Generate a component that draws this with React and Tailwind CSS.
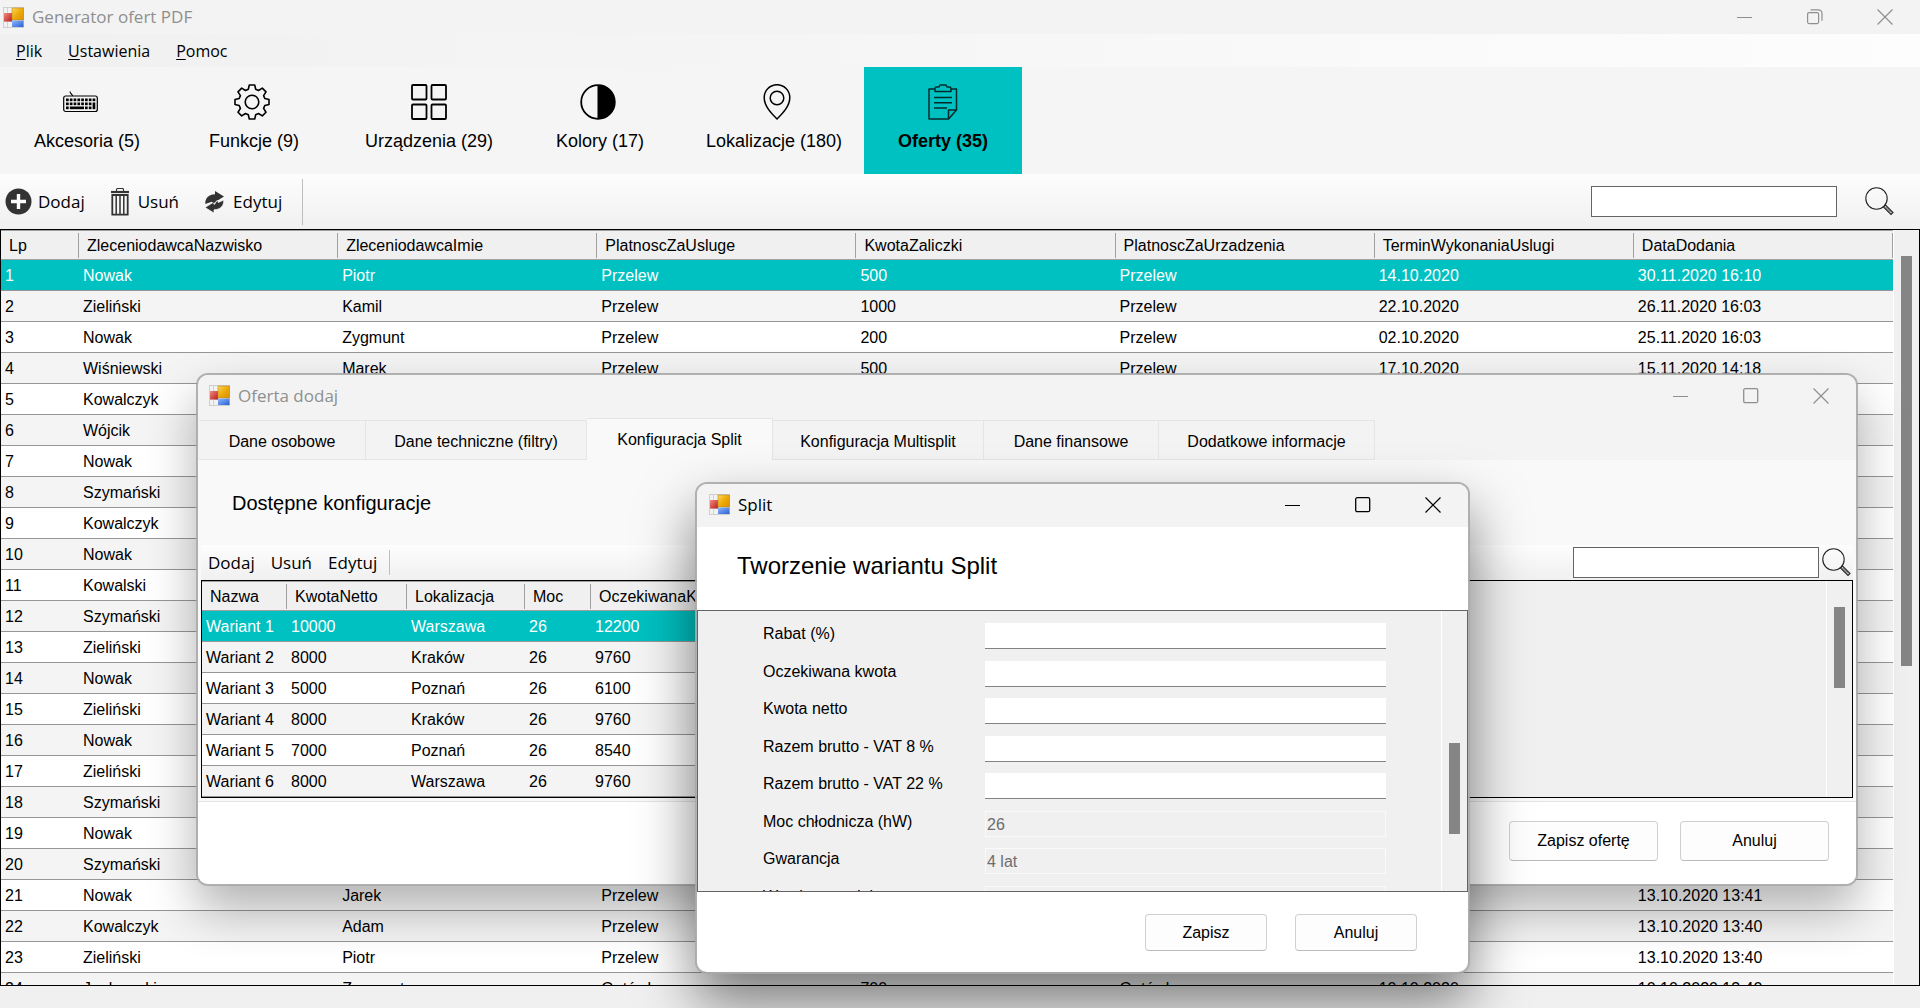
const SANS = "font-['Liberation_Sans',Arial,sans-serif]";
const UI = "font-['Open_Sans','Noto_Sans',sans-serif]";

const offerColumns = [
  "Lp",
  "ZleceniodawcaNazwisko",
  "ZleceniodawcaImie",
  "PlatnoscZaUsluge",
  "KwotaZaliczki",
  "PlatnoscZaUrzadzenia",
  "TerminWykonaniaUslugi",
  "DataDodania",
];

const offers = [
  ["Nowak", "Piotr", "Przelew", "500", "Przelew", "14.10.2020", "30.11.2020 16:10"],
  ["Zieliński", "Kamil", "Przelew", "1000", "Przelew", "22.10.2020", "26.11.2020 16:03"],
  ["Nowak", "Zygmunt", "Przelew", "200", "Przelew", "02.10.2020", "25.11.2020 16:03"],
  ["Wiśniewski", "Marek", "Przelew", "500", "Przelew", "17.10.2020", "15.11.2020 14:18"],
  ["Kowalczyk"],
  ["Wójcik"],
  ["Nowak"],
  ["Szymański"],
  ["Kowalczyk"],
  ["Nowak"],
  ["Kowalski"],
  ["Szymański"],
  ["Zieliński"],
  ["Nowak"],
  ["Zieliński"],
  ["Nowak"],
  ["Zieliński"],
  ["Szymański"],
  ["Nowak"],
  ["Szymański"],
  ["Nowak", "Jarek", "Przelew", "", "", "", "13.10.2020 13:41"],
  ["Kowalczyk", "Adam", "Przelew", "", "", "", "13.10.2020 13:40"],
  ["Zieliński", "Piotr", "Przelew", "", "", "", "13.10.2020 13:40"],
  ["Jankowski", "Zygmunt", "Gotówka", "700", "Gotówka", "10.10.2020", "10.10.2020 13:40"],
];

const variants = [
  ["Wariant 1", "10000", "Warszawa", "26", "12200"],
  ["Wariant 2", "8000", "Kraków", "26", "9760"],
  ["Wariant 3", "5000", "Poznań", "26", "6100"],
  ["Wariant 4", "8000", "Kraków", "26", "9760"],
  ["Wariant 5", "7000", "Poznań", "26", "8540"],
  ["Wariant 6", "8000", "Warszawa", "26", "9760"],
];

function AppIcon() {
  return (
    <svg width="21" height="21" viewBox="0 0 21 21" className="shrink-0" aria-hidden="true">
      <defs>
        <linearGradient id="gold" x1="0" y1="0" x2="1" y2="1">
          <stop offset="0" stopColor="#fbd95a" />
          <stop offset="0.5" stopColor="#eeaa0a" />
          <stop offset="1" stopColor="#d79200" />
        </linearGradient>
        <linearGradient id="red" x1="0" y1="0" x2="1" y2="1">
          <stop offset="0" stopColor="#f08a80" />
          <stop offset="1" stopColor="#b81c1c" />
        </linearGradient>
        <linearGradient id="blue" x1="0" y1="0" x2="1" y2="1">
          <stop offset="0" stopColor="#8fb8ff" />
          <stop offset="1" stopColor="#2a5fd0" />
        </linearGradient>
      </defs>
      <rect x="0.5" y="0.5" width="20" height="20" fill="#f2f2f2" stroke="#cfcfcf" />
      <path d="M4.500 0v21M0 14.500h9" stroke="#d2d2d2" />
      <rect x="1" y="6" width="8" height="8.500" fill="url(#red)" />
      <rect x="9" y="1" width="11.500" height="12" fill="url(#gold)" stroke="#b98a1c" strokeWidth="0.6" />
      <rect x="9" y="13.500" width="11.500" height="6.500" fill="url(#blue)" />
    </svg>
  );
}

function WindowButtons({ color, restored }) {
  return (
    <div className={`flex self-stretch ${color}`}>
      <button type="button" aria-label="Minimalizuj" className="grid w-[70px] place-items-center">
        <svg width="16" height="16" fill="none" stroke="currentColor"><path d="M0 8.500h15" /></svg>
      </button>
      <button type="button" aria-label="Maksymalizuj" className="grid w-[70px] place-items-center">
        <svg width="16" height="16" fill="none" stroke="currentColor">
          {restored ? (
            <>
              <rect x="0.600" y="3.600" width="11" height="11" rx="1.500" strokeWidth="1.200" />
              <path d="M3.500 0.800h8a3.500 3.500 0 0 1 3.500 3.500v7.500" strokeWidth="1.200" />
            </>
          ) : (
            <rect x="0.700" y="0.700" width="14" height="14" rx="1.500" strokeWidth="1.300" />
          )}
        </svg>
      </button>
      <button type="button" aria-label="Zamknij" className="grid w-[70px] place-items-center">
        <svg width="16" height="16" fill="none" stroke="currentColor" strokeWidth="1.200"><path d="M.5.5l15 15M15.500.5l-15 15" /></svg>
      </button>
    </div>
  );
}

function TitleBar({ title, height, color, restored }) {
  return (
    <header className={`flex shrink-0 items-center gap-2 bg-[#f3f3f3] ${UI} ${height}`}>
      <AppIcon />
      <h1 className={`flex-1 text-[17px] leading-6 ${color}`}>{title}</h1>
      <WindowButtons color={color} restored={restored} />
    </header>
  );
}

function Magnifier() {
  return (
    <svg width="29" height="29" viewBox="0 0 29 29" fill="none" stroke="#222" aria-hidden="true">
      <circle cx="11.500" cy="11.500" r="10.700" strokeWidth="1.100" />
      <path d="M18.500 20l2-2 7.500 7.500-2 2z" strokeWidth="1.100" />
      <path d="M20.500 20l5.500 5.500" strokeWidth="0.900" />
    </svg>
  );
}

function Search({ gap }) {
  return (
    <form className={`flex items-center ${gap}`}>
      <input type="search" aria-label="Szukaj" className="h-[31px] w-[246px] border border-[#646464] bg-white px-1" />
      <button type="button" aria-label="Szukaj"><Magnifier /></button>
    </form>
  );
}

function KeyboardIcon() {
  const keys = [];
  for (let row = 0; row < 3; row++) {
    for (let col = 0; col < 8; col++) {
      if (row === 2 && col > 0 && col < 5) continue;
      if (row > 0 && col === 7) continue;
      keys.push(<rect key={`${row}-${col}`} x={3 + col * 3.8} y={14.500 + row * 4} width="2.700" height="2.700" />);
    }
  }
  return (
    <svg width="49" height="36" viewBox="0 0 49 36" aria-hidden="true">
      <rect x="0.700" y="12" width="33.600" height="15.500" rx="2" fill="none" stroke="#000" strokeWidth="1.200" />
      <path d="M9.500 12c0-2-2.500-2-2.500-4.500" fill="none" stroke="#000" strokeWidth="1.100" />
      {keys}
      <rect x="6.800" y="22.500" width="14.200" height="2.700" />
      <rect x="29.600" y="18.500" width="2.700" height="6.700" />
    </svg>
  );
}

function GearIcon() {
  return (
    <svg width="41" height="36" viewBox="0 0 41 36" fill="none" stroke="#000" strokeWidth="1.600" strokeLinejoin="round" aria-hidden="true">
      <circle cx="18" cy="18" r="6.800" />
      <path d="M15.300 1h5.400l1 4.300 2.800 1.200 3.800-2.400 3.700 3.800-2.400 3.700 1.200 2.900 4.200 1v5l-4.200 1-1.200 2.900 2.400 3.800-3.700 3.700-3.800-2.400-2.800 1.200-1 4.300h-5.400l-1-4.300-2.800-1.200-3.800 2.400L4 28.200l2.400-3.800-1.200-2.900-4.200-1v-5l4.200-1 1.200-2.900L4 7.900l3.700-3.800 3.800 2.400 2.800-1.200z" />
    </svg>
  );
}

function TilesIcon() {
  return (
    <svg width="36" height="36" viewBox="0 0 36 36" fill="none" stroke="#000" strokeWidth="1.800" aria-hidden="true">
      <rect x="1" y="1" width="14.500" height="14.500" rx="1" />
      <rect x="20.500" y="1" width="14.500" height="14.500" rx="1" />
      <rect x="1" y="20.500" width="14.500" height="14.500" rx="1" />
      <rect x="20.500" y="20.500" width="14.500" height="14.500" rx="1" />
    </svg>
  );
}

function ContrastIcon() {
  return (
    <svg width="40" height="36" viewBox="0 0 40 36" aria-hidden="true">
      <circle cx="18" cy="18" r="16.800" fill="none" stroke="#000" strokeWidth="1.800" />
      <path d="M17.500 1a17 17 0 0 1 0 34z" />
    </svg>
  );
}

function PinIcon() {
  return (
    <svg width="36" height="36" viewBox="-3 0 36 36" fill="none" stroke="#000" strokeWidth="1.500" aria-hidden="true">
      <path d="M18 35C13 30 5.200 22.500 5.200 13.500a12.800 12.800 0 0 1 25.600 0C30.800 22.500 23 30 18 35z" />
      <circle cx="18" cy="14" r="6.800" />
    </svg>
  );
}

function ClipboardIcon() {
  return (
    <svg width="36" height="36" viewBox="0 0 36 36" fill="none" stroke="#062a2a" strokeWidth="1.500" strokeLinejoin="round" aria-hidden="true">
      <path d="M10 5H4v30h19.500l8-9V5h-6" />
      <path d="M23.500 35v-9h8" />
      <path d="M10 7.500V4.500a1.500 1.500 0 0 1 1.500-1.500H14l1-2h6l1 2h2.500A1.500 1.500 0 0 1 26 4.500v3z" />
      <path d="M9 13.500h18M9 18.800h18M9 24h13" />
    </svg>
  );
}

const sections = [
  { label: "Akcesoria (5)", Icon: KeyboardIcon, box: "w-[174px]" },
  { label: "Funkcje (9)", Icon: GearIcon, box: "w-[160px]" },
  { label: "Urządzenia (29)", Icon: TilesIcon, box: "w-[190px]" },
  { label: "Kolory (17)", Icon: ContrastIcon, box: "w-[152px]" },
  { label: "Lokalizacje (180)", Icon: PinIcon, box: "ml-2 w-[180px]" },
  { label: "Oferty (35)", Icon: ClipboardIcon, box: "w-[158px] bg-[#00c1c1] font-bold", current: true },
];

function AddIcon() {
  return (
    <svg width="27" height="27" viewBox="0 0 27 27" aria-hidden="true">
      <circle cx="13.500" cy="13.500" r="13" fill="#333" />
      <path d="M13.500 6v15M6 13.500h15" stroke="#fff" strokeWidth="3.400" />
    </svg>
  );
}

function TrashIcon() {
  return (
    <svg width="18" height="28" viewBox="0 0 18 28" fill="none" stroke="#333" aria-hidden="true">
      <path d="M5.500 3V1.500a1 1 0 0 1 1-1h5a1 1 0 0 1 1 1V3" strokeWidth="1.100" />
      <path d="M0 4h18" strokeWidth="2.200" />
      <path d="M1.300 7v19.700h15.400V7z" strokeWidth="1.800" />
      <path d="M5.200 7v19M9 7v19M12.800 7v19" strokeWidth="1.500" />
    </svg>
  );
}

function RefreshIcon() {
  return (
    <svg width="19" height="22" viewBox="0 0 19 22" fill="#333" aria-hidden="true">
      <path d="M0.300 13C0 7 3.500 3.500 10 3.200V0L19 5.500 11 10.500 8.200 12.800 6.800 10.800z" />
      <path d="M18.700 9c0.300 6-3.200 9.500-9.700 9.800V22L0 16.500 8 11.500 9.400 13.500 12.200 9.200 13.400 11.500z" stroke="#f8f8f8" strokeWidth="0.700" />
    </svg>
  );
}

const headCell = "relative h-[30px] overflow-hidden border-t border-b border-[#a0a0a0] pt-[2px] pl-2 text-left font-normal leading-[26px] whitespace-nowrap after:absolute after:top-[2px] after:right-0 after:h-[25px] after:w-px after:bg-[#a0a0a0]";
const bodyCell = "h-[31px] overflow-hidden border-b border-[#969696] pl-1 leading-[29px] whitespace-nowrap";

function Row({ cells, index }) {
  const tone = index === 0 ? "bg-[#00c1c1] text-white" : index % 2 ? "bg-[#f4f4f4]" : "bg-white";
  return (
    <tr className={tone}>
      {cells.map((cell, i) => (
        <td key={i} className={bodyCell}>{cell}</td>
      ))}
    </tr>
  );
}

function OffersTable() {
  return (
    <div className="mb-[22px] flex min-h-0 flex-1 items-start overflow-hidden border border-black bg-white text-base">
      <div className="min-w-0 flex-1">
        <table className="w-full table-fixed border-separate border-spacing-0">
          <colgroup>
            <col className="w-[78px]" />
            {offerColumns.slice(1).map((name) => <col key={name} />)}
          </colgroup>
          <thead>
            <tr className="bg-[#f0f0f0]">
              {offerColumns.map((name) => (
                <th key={name} scope="col" className={headCell}>{name}</th>
              ))}
            </tr>
          </thead>
          <tbody>
            {offers.map((offer, i) => (
              <Row key={i} index={i} cells={[i + 1, ...Array.from({ length: 7 }, (_, k) => offer[k] ?? "")]} />
            ))}
          </tbody>
        </table>
      </div>
      <div className="flex w-[26px] shrink-0 justify-center self-stretch border-l border-white bg-[#f0f0f0] pt-[26px]">
        <div className="h-[410px] w-[11px] bg-[#858585]" />
      </div>
    </div>
  );
}

const configTabs = [
  { label: "Dane osobowe", box: "w-[167px]" },
  { label: "Dane techniczne (filtry)", box: "w-[221px]" },
  { label: "Konfiguracja Split", box: "w-[186px]", current: true },
  { label: "Konfiguracja Multisplit", box: "w-[211px]" },
  { label: "Dane finansowe", box: "w-[175px]" },
  { label: "Dodatkowe informacje", box: "w-[216px]" },
];

const pushButton = "rounded border border-[#d0d0d0] border-b-[#bbbbbb] bg-[#fdfdfd] text-base";
const dialogFrame = "absolute flex flex-col overflow-hidden rounded-xl border-2 border-[#a8a8a8]/90 bg-clip-padding";

function OfferWindow() {
  return (
    <section aria-label="Oferta dodaj" className={`${dialogFrame} top-[373px] right-[62px] left-[196px] bg-[#f3f3f3] shadow-[0_24px_48px_rgba(0,0,0,0.3)]`}>
      <TitleBar title="Oferta dodaj" height="h-[43px] pb-[2px] pl-[11px]" color="text-[#8f8f8f]" />
      <div role="tablist" className="flex h-[42px] items-end pl-px">
        {configTabs.map((tab) => (
          <button
            key={tab.label}
            type="button"
            role="tab"
            aria-selected={Boolean(tab.current)}
            className={`border-t border-r border-[#e5e5e5] text-base ${tab.box} ${tab.current ? "h-[42px] bg-[#f9f9f9]" : "h-10 border-b bg-[#f3f3f3] pt-[3px]"}`}
          >
            {tab.label}
          </button>
        ))}
      </div>
      <div className="border-b border-[#e5e5e5] bg-[#f9f9f9] px-[3px] pb-[3px]">
        <h2 className="px-[31px] pt-[29px] pb-7 text-xl leading-7">Dostępne konfiguracje</h2>
        <div className={`flex h-[35px] items-center bg-linear-to-b from-[#fdfdfd] to-[#f0f0f0] pr-[2px] text-[17px] leading-6 ${UI}`}>
          <div className="flex flex-1 items-center gap-4 pl-[7px]">
            <button type="button">Dodaj</button>
            <button type="button">Usuń</button>
            <button type="button">Edytuj</button>
            <span className="-ml-1 h-[25px] w-px bg-[#bdbdbd]" />
          </div>
          <Search gap="gap-[3px]" />
        </div>
        <div className="flex border border-black bg-[#f0f0f0] text-base">
          <table className="w-[560px] table-fixed border-separate border-spacing-0">
            <colgroup>
              <col className="w-[85px]" />
              <col className="w-[120px]" />
              <col className="w-[118px]" />
              <col className="w-[66px]" />
              <col />
            </colgroup>
            <thead>
              <tr>
                {["Nazwa", "KwotaNetto", "Lokalizacja", "Moc", "OczekiwanaKwota"].map((name) => (
                  <th key={name} scope="col" className={headCell}>{name}</th>
                ))}
              </tr>
            </thead>
            <tbody>
              {variants.map((cells, i) => <Row key={i} index={i} cells={cells} />)}
            </tbody>
          </table>
          <div className="ml-auto flex w-[26px] justify-center border-l border-white pt-[26px]">
            <div className="h-[81px] w-[11px] bg-[#858585]" />
          </div>
        </div>
      </div>
      <footer className="flex h-[82px] items-start justify-end gap-[22px] bg-white pt-[19px] pr-[27px]">
        <button type="button" className={`${pushButton} h-10 w-[149px]`}>Zapisz ofertę</button>
        <button type="button" className={`${pushButton} h-10 w-[149px]`}>Anuluj</button>
      </footer>
    </section>
  );
}

const fields = [
  { id: "rabat", label: "Rabat (%)" },
  { id: "oczekiwana", label: "Oczekiwana kwota" },
  { id: "netto", label: "Kwota netto" },
  { id: "vat8", label: "Razem brutto - VAT 8 %" },
  { id: "vat22", label: "Razem brutto - VAT 22 %" },
  { id: "moc", label: "Moc chłodnicza (hW)", value: "26", locked: true },
  { id: "gwarancja", label: "Gwarancja", value: "4 lat", locked: true },
  { id: "wymiary", label: "Wymiary modelu", value: "", locked: true },
];

function SplitWindow() {
  return (
    <section aria-label="Split" className={`${dialogFrame} top-[482px] left-[695px] w-[775px] bg-white shadow-[0_28px_56px_rgba(0,0,0,0.5)]`}>
      <TitleBar title="Split" height="h-[43px] pb-[2px] pl-3" color="text-black" />
      <h2 className="px-10 pt-[23px] pb-7 text-2xl leading-8">Tworzenie wariantu Split</h2>
      <div className="flex h-[282px] overflow-hidden border border-[#646464] bg-[#f0f0f0]">
        <form className="flex-1 pt-3 pr-[55px] pl-[65px]">
          {fields.map((field) => (
            <div key={field.id} className="flex items-start odd:h-[38px] even:h-[37px]">
              <label htmlFor={field.id} className="w-[222px] pt-px text-base leading-5">{field.label}</label>
              <input
                id={field.id}
                type="text"
                defaultValue={field.value}
                disabled={field.locked}
                className={`h-[26px] min-w-0 flex-1 px-px text-base ${field.locked ? "border border-[#fafafa] bg-[#f0f0f0] pt-px text-[#6d6d6d]" : "border-b border-[#838383] bg-white"}`}
              />
            </div>
          ))}
        </form>
        <div className="flex w-[26px] justify-center border-l border-white pt-[132px]">
          <div className="h-[91px] w-[11px] bg-[#858585]" />
        </div>
      </div>
      <footer className="flex h-[80px] items-start justify-end gap-7 pt-[22px] pr-[51px]">
        <button type="button" className={`${pushButton} h-[37px] w-[122px]`}>Zapisz</button>
        <button type="button" className={`${pushButton} h-[37px] w-[122px]`}>Anuluj</button>
      </footer>
    </section>
  );
}

export default function App() {
  return (
    <main className={`relative flex h-screen flex-col overflow-hidden bg-[#f0f0f0] text-black ${SANS}`}>
      <TitleBar title="Generator ofert PDF" height="h-[34px] pl-[3px]" color="text-[#8f8f8f]" restored />
      <nav aria-label="Menu" className={`flex h-[33px] items-center gap-[26px] bg-linear-to-r from-[#f0f0f0] to-[#fdfdfd] pt-px pl-4 text-base leading-6 ${UI}`}>
        <button type="button"><u className="underline-offset-2">P</u>lik</button>
        <button type="button"><u className="underline-offset-2">U</u>stawienia</button>
        <button type="button"><u className="underline-offset-2">P</u>omoc</button>
      </nav>
      <nav aria-label="Sekcje" className="flex h-[107px] bg-[#f5f5f5] text-lg leading-6">
        {sections.map(({ label, Icon, box, current }) => (
          <button
            key={label}
            type="button"
            aria-current={current ? "page" : undefined}
            className={`flex flex-col items-center gap-[9px] pt-[17px] ${box}`}
          >
            <Icon />
            {label}
          </button>
        ))}
      </nav>
      <div className={`flex h-[55px] items-center bg-linear-to-b from-[#fdfdfd] to-[#f0f0f0] pr-[26px] pl-[5px] text-[17px] leading-6 ${UI}`}>
        <div className="flex flex-1 items-center gap-[26px]">
          <button type="button" className="flex items-center gap-[6px]"><AddIcon />Dodaj</button>
          <button type="button" className="flex items-center gap-[9px]"><TrashIcon />Usuń</button>
          <button type="button" className="flex items-center gap-[9px]"><RefreshIcon />Edytuj</button>
          <span className="-ml-[6px] h-[46px] w-px bg-[#bdbdbd]" />
        </div>
        <Search gap="gap-7" />
      </div>
      <OffersTable />
      <OfferWindow />
      <SplitWindow />
    </main>
  );
}
